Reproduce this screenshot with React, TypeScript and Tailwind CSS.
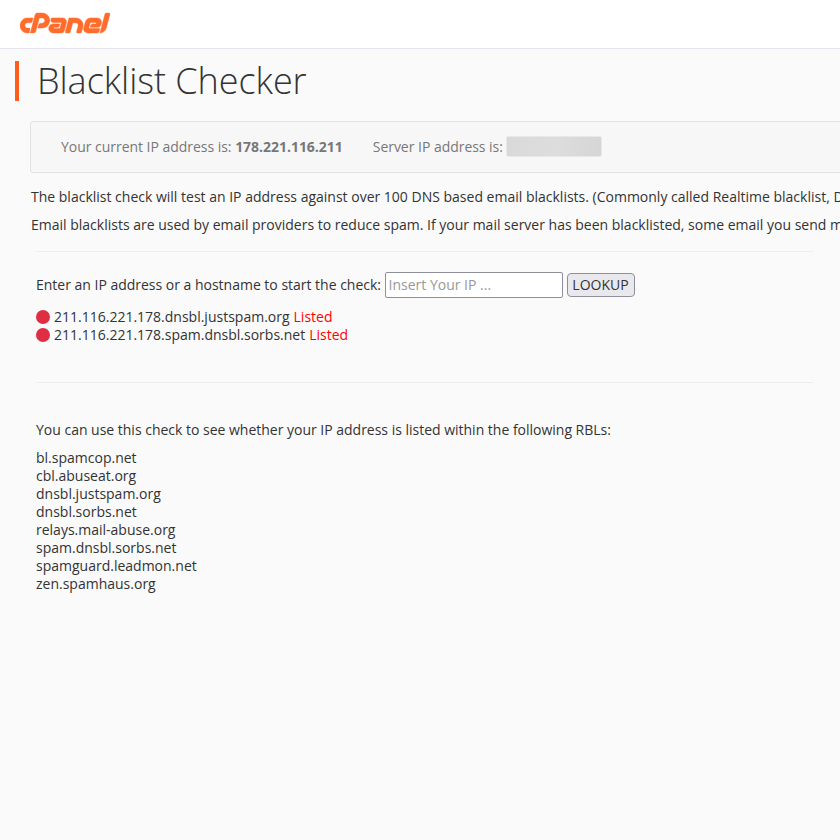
import React from 'react';
import { SiCpanel } from 'react-icons/si';

const listed = [
  '211.116.221.178.dnsbl.justspam.org',
  '211.116.221.178.spam.dnsbl.sorbs.net',
];

const rbls = [
  'bl.spamcop.net',
  'cbl.abuseat.org',
  'dnsbl.justspam.org',
  'dnsbl.sorbs.net',
  'relays.mail-abuse.org',
  'spam.dnsbl.sorbs.net',
  'spamguard.leadmon.net',
  'zen.spamhaus.org',
];

function Header() {
  return (
    <header className="flex h-[49px] items-center overflow-hidden border-b border-[#e4e4f0] bg-white pl-5 pb-0.5">
      <SiCpanel className="size-[90px] shrink-0 stroke-[#ff6c2c] stroke-[0.12] text-[#ff6c2c]" />
    </header>
  );
}

export default function App() {
  return (
    <div className="h-screen w-full overflow-hidden bg-[#fafafa] font-['Open_Sans','Noto_Sans',sans-serif] text-[14px] leading-[18px] text-[#333333]">
      <Header />
      <h1 className="mt-3 ml-[15px] h-10 border-l-4 border-[#ff5e1a] pl-[18px] text-[36px] leading-10 font-light tracking-[-0.05px] whitespace-nowrap">
        Blacklist Checker
      </h1>
      <section className="mt-5 ml-[30px] flex h-[52px] w-[840px] items-center rounded-[3px] border border-[#e3e3e3] bg-[#f7f7f7] pl-[30px] tracking-[-0.03px] whitespace-nowrap text-[#777777]">
        <p>
          Your current IP address is: <b className="font-bold">178.221.116.211</b>
        </p>
        <p className="ml-[30px]">Server IP address is:</p>
        <span className="mb-px ml-[3px] h-[21px] w-24 rounded-[2px] border border-[#e8e8e8] bg-linear-to-r from-[#d9d9d9] via-[#dddddd] to-[#d6d6d6]" />
      </section>
      <div className="mt-[15px] ml-[31px] flex flex-col gap-2.5 whitespace-nowrap">
        <p>
          The blacklist check will test an IP address against over 100 DNS based email blacklists. (Commonly called
          Realtime blacklist, D
        </p>
        <p>
          Email blacklists are used by email providers to reduce spam. If your mail server has been blacklisted, some
          email you send m
        </p>
      </div>
      <main className="ml-9 w-[777px]">
        <hr className="mt-[17px] border-[#eeeeee]" />
        <form className="mt-5 flex items-center" onSubmit={(e) => e.preventDefault()}>
          <label htmlFor="ip" className="tracking-[-0.01px]">
            Enter an IP address or a hostname to start the check:
          </label>
          <input
            id="ip"
            placeholder="Insert Your IP ..."
            className="ml-[3.5px] h-[26px] w-[178px] rounded-[2px] border border-[#8f8f9d] bg-white px-[3px] pb-px leading-[18px] placeholder:text-[#999999]"
          />
          <button className="ml-1 h-6 w-[68px] rounded-[4px] border border-[#8f8f9d] bg-[#e9e9ed]">LOOKUP</button>
        </form>
        <ul className="mt-2.5">
          {listed.map((host) => (
            <li key={host} className="flex items-center">
              <span className="mr-1 size-3.5 rounded-full bg-[#dd2e44]" />
              {host}
              <span className="ml-1 text-[#ff0000]">Listed</span>
            </li>
          ))}
        </ul>
        <hr className="mt-[38px] border-[#eeeeee]" />
        <p className="mt-[38px] tracking-[-0.01px]">
          You can use this check to see whether your IP address is listed within the following RBLs:
        </p>
        <ul className="mt-2.5">
          {rbls.map((name) => (
            <li key={name}>{name}</li>
          ))}
        </ul>
      </main>
    </div>
  );
}
